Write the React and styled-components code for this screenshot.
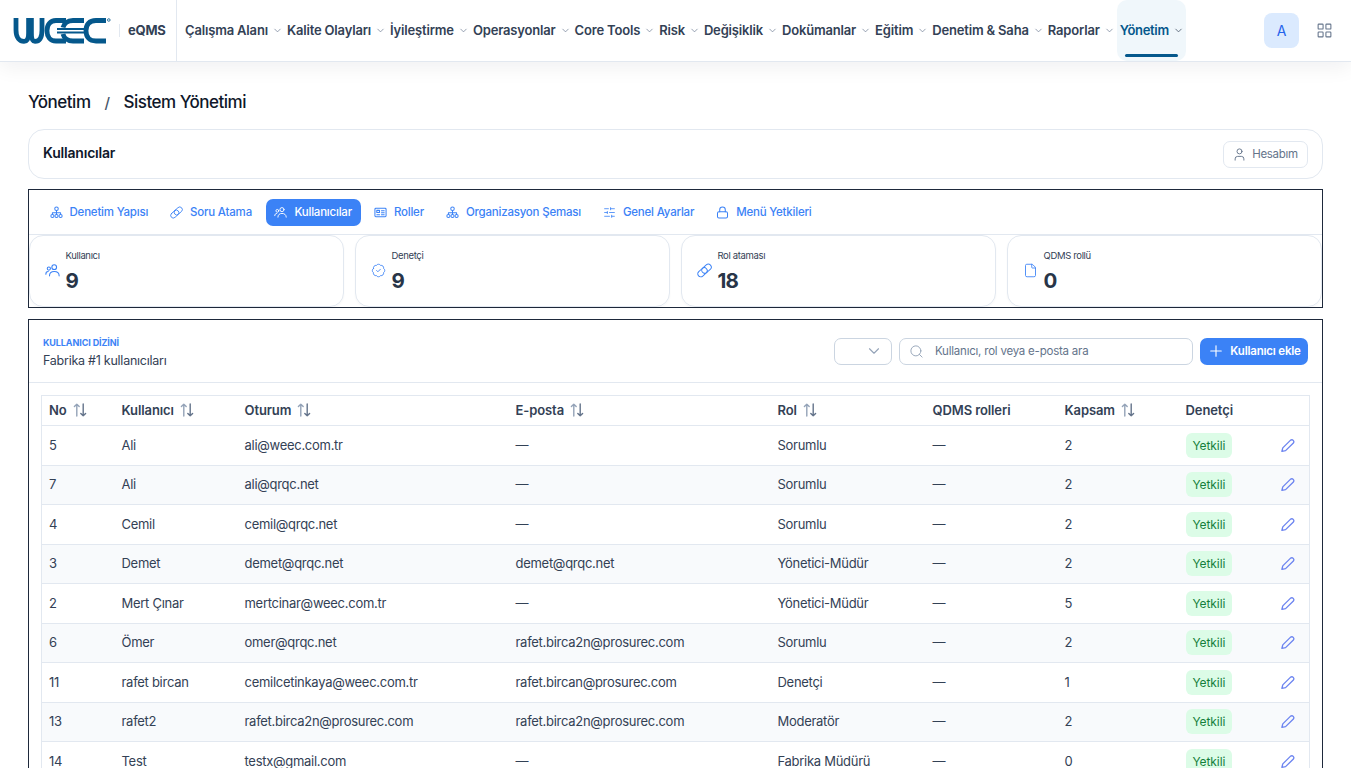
import React from "react";
import styled, { createGlobalStyle } from "styled-components";
import {
  BadgeCheck,
  ChevronDown,
  File,
  LayoutGrid,
  Plus,
  Search,
  SlidersHorizontal,
  User,
} from "lucide-react";

const Glyph = ({ size = 14, strokeWidth = 1.1, color = "currentColor", children }) => (
  <svg
    width={size}
    height={size}
    viewBox="0 0 14 14"
    fill="none"
    stroke={color}
    strokeWidth={strokeWidth}
    strokeLinecap="round"
    strokeLinejoin="round"
  >
    {children}
  </svg>
);

const TreeIcon = (props) => (
  <Glyph {...props}>
    <circle cx="7" cy="3" r="1.9" />
    <path d="M7 5V9M2.6 9V7.2H11.4V9" />
    <circle cx="2.6" cy="10.8" r="1.7" />
    <circle cx="7" cy="10.8" r="1.7" />
    <circle cx="11.4" cy="10.8" r="1.7" />
  </Glyph>
);

const LinkIcon = ({ size }) => (
  <Glyph size={size} strokeWidth={0.9}>
    <rect x="-0.5" y="4.2" width="10" height="5.6" rx="2.8" transform="rotate(-42 7 7)" />
    <rect x="4.5" y="4.2" width="10" height="5.6" rx="2.8" transform="rotate(-42 7 7)" />
  </Glyph>
);

const UsersIcon = ({ size }) => (
  <Glyph size={size} strokeWidth={1}>
    <circle cx="8.6" cy="3.9" r="2.2" />
    <path d="M4.2 12C4.2 9.4 6 8 8.6 8S13.2 9.4 13.2 12" />
    <circle cx="3.6" cy="5.2" r="1.5" />
    <path d="M0.8 10.4C0.8 8.9 1.7 8 3 8" />
  </Glyph>
);

const CardIcon = (props) => (
  <Glyph {...props}>
    <rect x="1" y="2.4" width="12" height="9.2" rx="1" />
    <rect x="3" y="4.7" width="2.9" height="2.3" />
    <path d="M3 9.3H6M8 5H11M8 7.2H11M8 9.3H11" />
  </Glyph>
);

const LockIcon = (props) => (
  <Glyph {...props}>
    <rect x="1.6" y="6.2" width="10.8" height="6.8" rx="1.6" />
    <path d="M4 6.2V4A3 3 0 0 1 10 4V6.2" />
  </Glyph>
);

const SlidersIcon = ({ size = 14 }) => <SlidersHorizontal size={size} strokeWidth={1.5} />;

const PenIcon = () => (
  <Glyph size={15} strokeWidth={1.25} color="#6c84f0">
    <path d="M1.8 12.4L2.6 9.2L9.9 2A1.9 1.9 0 0 1 12.5 4.7L5.2 11.8Z" />
  </Glyph>
);

const SortIcon = () => (
  <Glyph size={14} strokeWidth={1.4}>
    <g stroke="#94a3b8">
      <path d="M3.8 13V1.2M1.4 3.6L3.8 1.2L6.2 3.6" />
    </g>
    <g stroke="#64748b">
      <path d="M10.2 1V12.8M7.8 10.4L10.2 12.8L12.6 10.4" />
    </g>
  </Glyph>
);

const navItems = [
  "Çalışma Alanı",
  "Kalite Olayları",
  "İyileştirme",
  "Operasyonlar",
  "Core Tools",
  "Risk",
  "Değişiklik",
  "Dokümanlar",
  "Eğitim",
  "Denetim & Saha",
  "Raporlar",
];

const tabs = [
  { name: "Denetim Yapısı", icon: TreeIcon },
  { name: "Soru Atama", icon: LinkIcon },
  { name: "Kullanıcılar", icon: UsersIcon, active: true },
  { name: "Roller", icon: CardIcon },
  { name: "Organizasyon Şeması", icon: TreeIcon },
  { name: "Genel Ayarlar", icon: SlidersIcon },
  { name: "Menü Yetkileri", icon: LockIcon },
];

const stats = [
  { label: "Kullanıcı", value: "9", icon: UsersIcon },
  { label: "Denetçi", value: "9", icon: BadgeCheck },
  { label: "Rol ataması", value: "18", icon: LinkIcon },
  { label: "QDMS rollü", value: "0", icon: File },
];

const columns = [
  { name: "No", width: 73, sort: true },
  { name: "Kullanıcı", width: 123, sort: true },
  { name: "Oturum", width: 271, sort: true },
  { name: "E-posta", width: 262, sort: true },
  { name: "Rol", width: 155, sort: true },
  { name: "QDMS rolleri", width: 132 },
  { name: "Kapsam", width: 121, sort: true },
  { name: "Denetçi", width: 131 },
];

const users = [
  ["5", "Ali", "ali@weec.com.tr", "—", "Sorumlu", "2"],
  ["7", "Ali", "ali@qrqc.net", "—", "Sorumlu", "2"],
  ["4", "Cemil", "cemil@qrqc.net", "—", "Sorumlu", "2"],
  ["3", "Demet", "demet@qrqc.net", "demet@qrqc.net", "Yönetici-Müdür", "2"],
  ["2", "Mert Çınar", "mertcinar@weec.com.tr", "—", "Yönetici-Müdür", "5"],
  ["6", "Ömer", "omer@qrqc.net", "rafet.birca2n@prosurec.com", "Sorumlu", "2"],
  ["11", "rafet bircan", "cemilcetinkaya@weec.com.tr", "rafet.bircan@prosurec.com", "Denetçi", "1"],
  ["13", "rafet2", "rafet.birca2n@prosurec.com", "rafet.birca2n@prosurec.com", "Moderatör", "2"],
  ["14", "Test", "testx@gmail.com", "—", "Fabrika Müdürü", "0"],
];

const Logo = () => (
  <svg width="98" height="26" viewBox="0 0 98 26" fill="none" stroke="#05588c" strokeWidth="4.8">
    <path d="M3 0V12C3 20 7 23.4 11 23.4C14.6 23.4 15.6 20 15.6 15V0" />
    <path d="M18.4 0V15C18.4 20 19.4 23.4 22 23.4C26 23.4 29 20 29 12V0" />
    <path d="M53 2.5H43C37 2.5 34 7 34 12.7C34 18.4 37 23 43 23H53" />
    <path d="M71 2.5H60C54 2.5 50.8 6 50 9.5" />
    <path d="M50 16C50.8 19.5 54 23 60 23H71" />
    <path d="M44 11H71M44 14.5H71" strokeWidth="2" />
    <path d="M93 2.5H83C76 2.5 73 7 73 12.7C73 18.4 76 23 83 23H93" />
    <circle cx="95.8" cy="2" r="1.3" strokeWidth="0.8" />
  </svg>
);

const App = () => {
  return (
    <Page>
      <GlobalStyle />
      <Header>
        <Brand>
          <Logo />
          <BrandLine />
          <BrandName>eQMS</BrandName>
        </Brand>
        <Nav>
          {navItems.map((item) => (
            <NavItem key={item}>
              <NavLabel>{item}</NavLabel>
              <ChevronDown size={11} strokeWidth={1.6} color="#718096" />
            </NavItem>
          ))}
          <NavActive>
            <NavLabel>Yönetim</NavLabel>
            <ChevronDown size={11} strokeWidth={1.75} color="#475569" />
          </NavActive>
        </Nav>
        <HeaderRight>
          <Avatar>A</Avatar>
          <LayoutGrid size={17} strokeWidth={1.5} color="#64748b" />
        </HeaderRight>
      </Header>

      <Content>
        <Breadcrumb>
          <span>Yönetim</span>
          <Slash>/</Slash>
          <span>Sistem Yönetimi</span>
        </Breadcrumb>

        <TitleCard>
          <Title>Kullanıcılar</Title>
          <AccountButton>
            <User size={15} strokeWidth={1.5} />
            Hesabım
          </AccountButton>
        </TitleCard>

        <Panel>
          <Tabs>
            {tabs.map((tab) => (
              <Tab key={tab.name} $active={tab.active}>
                <tab.icon size={13} />
                {tab.name}
              </Tab>
            ))}
          </Tabs>
          <StatGrid>
            {stats.map((stat) => (
              <StatCard key={stat.label}>
                <StatIcon>
                  <stat.icon size={15} strokeWidth={1.4} />
                </StatIcon>
                <div>
                  <StatLabel>{stat.label}</StatLabel>
                  <StatValue>{stat.value}</StatValue>
                </div>
              </StatCard>
            ))}
          </StatGrid>
        </Panel>

        <Directory>
          <DirectoryHead>
            <div>
              <Eyebrow>KULLANICI DİZİNİ</Eyebrow>
              <Subtitle>Fabrika #1 kullanıcıları</Subtitle>
            </div>
            <Controls>
              <SelectBox>
                <ChevronDown size={18} strokeWidth={1.5} color="#94a3b8" />
              </SelectBox>
              <SearchBox>
                <Search size={15} strokeWidth={1.5} color="#94a3b8" />
                <Placeholder>Kullanıcı, rol veya e-posta ara</Placeholder>
              </SearchBox>
              <AddButton>
                <Plus size={18} strokeWidth={1.5} />
                Kullanıcı ekle
              </AddButton>
            </Controls>
          </DirectoryHead>

          <TableWrap>
            <Table>
              <colgroup>
                {columns.map((col) => (
                  <col key={col.name} width={col.width} />
                ))}
              </colgroup>
              <thead>
                <tr>
                  {columns.map((col) => (
                    <Th key={col.name}>
                      <ThInner>
                        {col.name}
                        {col.sort && <SortIcon />}
                      </ThInner>
                    </Th>
                  ))}
                </tr>
              </thead>
              <tbody>
                {users.map((row, i) => (
                  <Row key={row[0]} $alt={i % 2 === 1}>
                    <Td>{row[0]}</Td>
                    <Td>{row[1]}</Td>
                    <Td>{row[2]}</Td>
                    <Td>{row[3]}</Td>
                    <Td>{row[4]}</Td>
                    <Td>—</Td>
                    <Td>{row[5]}</Td>
                    <BadgeTd>
                      <BadgeCell>
                        <Badge>Yetkili</Badge>
                        <PenIcon />
                      </BadgeCell>
                    </BadgeTd>
                  </Row>
                ))}
              </tbody>
            </Table>
          </TableWrap>
        </Directory>
      </Content>
    </Page>
  );
};

export default App;

const GlobalStyle = createGlobalStyle`
  html, body {
    margin: 0;
    height: 100%;
    overflow: hidden;
    background: #fff;
  }
  * {
    box-sizing: border-box;
  }
`;
const Page = styled.div`
  width: 1351px;
  height: 100vh;
  overflow: hidden;
  font-family: Inter, "Noto Sans", sans-serif;
  color: #334155;
`;
const Header = styled.header`
  height: 62px;
  display: flex;
  align-items: stretch;
  background: #fff;
  border-bottom: 1px solid #e2e8f0;
  box-shadow: 0 6px 20px rgba(15, 23, 42, 0.06);
`;
const Brand = styled.div`
  width: 177px;
  flex: none;
  display: flex;
  align-items: center;
  padding-left: 13px;
  border-right: 1px solid #e2e8f0;
`;
const BrandLine = styled.div`
  width: 1px;
  height: 13px;
  margin: 0 8px;
  background: #e2e8f0;
`;
const BrandName = styled.div`
  margin-bottom: 2px;
  font-size: 13px;
  font-weight: 700;
  color: #334155;
  letter-spacing: -0.2px;
`;
const Nav = styled.nav`
  display: flex;
  align-items: stretch;
  padding-left: 8px;
`;
const NavItem = styled.div`
  display: flex;
  align-items: center;
  gap: 4px;
  padding-right: 4px;
  font-size: 13px;
  font-weight: 600;
  letter-spacing: -0.17px;
  color: #334155;
  white-space: nowrap;
`;
const NavLabel = styled.span`
  margin-bottom: 2px;
`;
const NavActive = styled(NavItem)`
  position: relative;
  width: 69px;
  height: 61px;
  padding: 0 0 0 3px;
  margin-left: -2px;
  border-radius: 10px;
  background: #f0f7fb;
  color: #05588c;
  letter-spacing: -0.3px;

  &::after {
    content: "";
    position: absolute;
    left: 8px;
    right: 8px;
    bottom: 4px;
    height: 3px;
    border-radius: 2px;
    background: #05588c;
  }
`;
const HeaderRight = styled.div`
  margin-left: auto;
  display: flex;
  align-items: center;
  gap: 17px;
  padding-right: 18px;
`;
const Avatar = styled.div`
  width: 35px;
  height: 35px;
  display: flex;
  align-items: center;
  justify-content: center;
  border-radius: 8px;
  background: #dbeafe;
  color: #2563eb;
  font-size: 14px;
`;
const Content = styled.main`
  padding: 28px 28px 0;
`;
const Breadcrumb = styled.div`
  display: flex;
  align-items: center;
  gap: 14px;
  height: 24px;
  margin-bottom: 15px;
  font-size: 17px;
  font-weight: 500;
  letter-spacing: -0.5px;
  color: #0f172a;
`;
const Slash = styled.span`
  font-size: 15px;
  color: #475569;
`;
const TitleCard = styled.section`
  height: 50px;
  display: flex;
  align-items: center;
  justify-content: space-between;
  padding: 0 14px;
  margin-bottom: 10px;
  border: 1px solid #e2e8f0;
  border-radius: 16px;
`;
const Title = styled.h2`
  margin: 0 0 4px;
  font-size: 14px;
  font-weight: 600;
  letter-spacing: -0.2px;
  color: #0f172a;
`;
const AccountButton = styled.button`
  width: 85px;
  height: 27px;
  display: flex;
  align-items: center;
  justify-content: center;
  gap: 5px;
  padding: 0 1px 0 0;
  border: 1px solid #e2e8f0;
  border-radius: 7px;
  background: #fff;
  color: #64748b;
  font-family: inherit;
  font-size: 11.5px;
  letter-spacing: -0.3px;
`;
const Panel = styled.section`
  height: 119px;
  margin-bottom: 11px;
  border: 1px solid #1e293b;
`;
const Tabs = styled.div`
  height: 45px;
  display: flex;
  align-items: center;
  gap: 4px;
  padding-left: 11.5px;
  border-bottom: 1px solid #e2e8f0;
`;
const Tab = styled.div`
  height: 27px;
  display: flex;
  align-items: center;
  gap: 7px;
  padding: 0 9px;
  margin-left: ${(p) => (p.$active ? "1px" : "0")};
  padding-left: ${(p) => (p.$active ? "8.5px" : "9px")};
  border-radius: 7px;
  font-size: 11.5px;
  font-weight: 500;
  letter-spacing: -0.21px;
  white-space: nowrap;
  background: ${(p) => (p.$active ? "#3b82f6" : "transparent")};
  color: ${(p) => (p.$active ? "#fff" : "#3b82f6")};
`;
const StatGrid = styled.div`
  display: grid;
  grid-template-columns: repeat(4, 315px);
  gap: 11px;
`;
const StatCard = styled.div`
  height: 72px;
  display: flex;
  align-items: center;
  gap: 5.5px;
  padding-left: 15px;
  border: 1px solid #e2e8f0;
  border-radius: 14px;
  box-shadow: 0 1px 2px rgba(15, 23, 42, 0.04);
`;
const StatIcon = styled.div`
  display: flex;
  margin-bottom: 2px;
  color: #3b82f6;
`;
const StatLabel = styled.div`
  font-size: 9.5px;
  letter-spacing: -0.35px;
  color: #334155;
  margin-bottom: 8px;
`;
const StatValue = styled.div`
  font-size: 20.5px;
  line-height: 24px;
  font-weight: 700;
  letter-spacing: -0.8px;
  color: #283548;
`;
const Directory = styled.section`
  height: 600px;
  border: 1px solid #1e293b;
`;
const DirectoryHead = styled.div`
  height: 63px;
  display: flex;
  align-items: center;
  justify-content: space-between;
  padding: 0 14px;
  border-bottom: 1px solid #e2e8f0;
`;
const Eyebrow = styled.div`
  font-size: 9px;
  font-weight: 700;
  letter-spacing: -0.1px;
  color: #3b82f6;
  margin-top: 2px;
  margin-bottom: 5px;
`;
const Subtitle = styled.div`
  font-size: 12.5px;
  letter-spacing: -0.25px;
  color: #334155;
`;
const Controls = styled.div`
  display: flex;
  align-items: center;
  gap: 7px;
`;
const SelectBox = styled.div`
  width: 58px;
  height: 27px;
  display: flex;
  align-items: center;
  justify-content: flex-end;
  padding-right: 8px;
  border: 1px solid #cbd5e1;
  border-radius: 7px;
`;
const SearchBox = styled.div`
  width: 294px;
  height: 27px;
  display: flex;
  align-items: center;
  gap: 11px;
  padding-left: 9px;
  border: 1px solid #cbd5e1;
  border-radius: 7px;
  font-size: 11.5px;
  letter-spacing: -0.22px;
  color: #64748b;
`;
const Placeholder = styled.span`
  margin-bottom: 1px;
`;
const AddButton = styled.button`
  width: 108px;
  height: 27px;
  display: flex;
  align-items: center;
  justify-content: center;
  gap: 5px;
  padding: 0;
  border: 0;
  border-radius: 7px;
  background: #3b82f6;
  color: #fff;
  font-family: inherit;
  font-size: 11.5px;
  font-weight: 600;
  letter-spacing: -0.2px;
`;
const TableWrap = styled.div`
  padding: 12px 13px 0 12px;
`;
const Table = styled.table`
  width: 1268px;
  table-layout: fixed;
  border-collapse: collapse;
  border: 1px solid #e2e8f0;
  font-size: 13px;
`;
const Th = styled.th`
  height: 30px;
  padding: 0 7px 2px;
  text-align: left;
  font-weight: 600;
  letter-spacing: -0.1px;
  color: #334155;
  border-bottom: 1px solid #e2e8f0;
`;
const ThInner = styled.div`
  display: flex;
  align-items: center;
  gap: 6px;
`;
const Row = styled.tr`
  height: 39.5px;
  background: ${(p) => (p.$alt ? "#f8fafc" : "#fff")};
`;
const Td = styled.td`
  padding: 0 7px 1px;
  color: #334155;
  letter-spacing: -0.28px;
  white-space: nowrap;
  border-bottom: 1px solid #e2e8f0;
`;
const BadgeTd = styled(Td)`
  padding-bottom: 0;
`;
const BadgeCell = styled.div`
  display: flex;
  align-items: center;
  justify-content: space-between;
  padding-right: 7px;
`;
const Badge = styled.span`
  height: 25px;
  display: inline-flex;
  align-items: center;
  padding: 0 7px;
  border-radius: 6px;
  background: #dcfce7;
  color: #15803d;
  font-size: 12px;
  font-weight: 400;
  letter-spacing: -0.1px;
`;
